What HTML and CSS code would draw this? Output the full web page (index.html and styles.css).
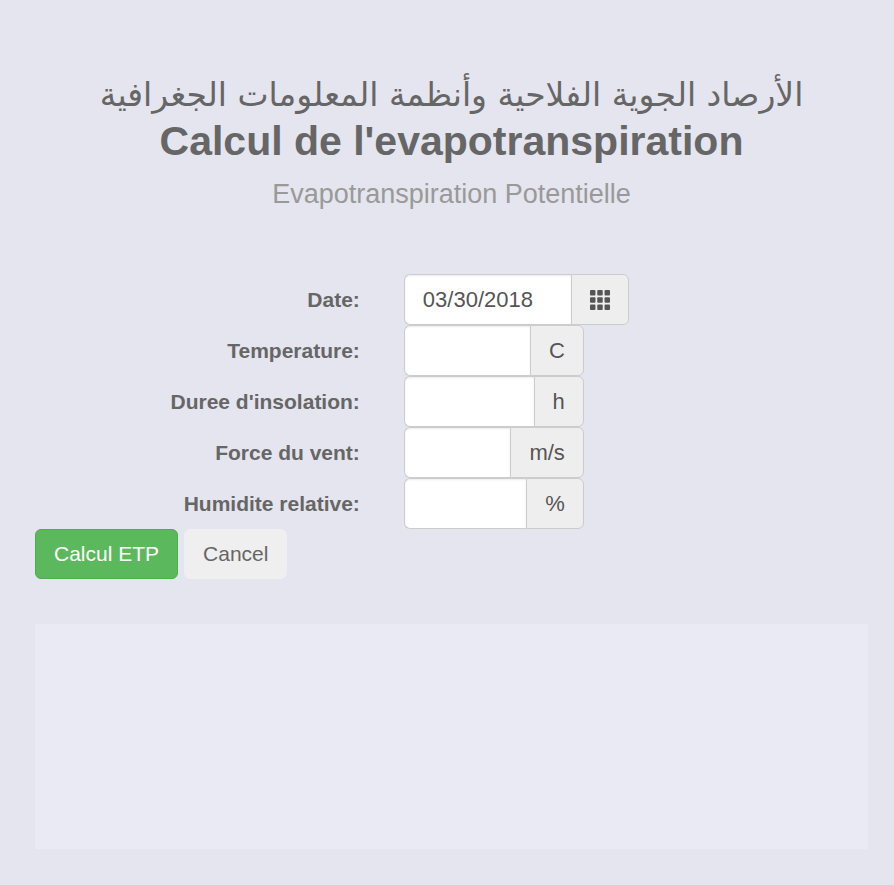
FILE: index.html
```
<!doctype html>
<html lang="fr">
<head>
	<title>Calcul de l'evapotranspiration</title>
<meta charset="utf-8">
<link rel="stylesheet" href="styles.css">
</head>
<body>
	<header>
		<h1><span class="arabic" lang="ar" dir="rtl">الأرصاد الجوية الفلاحية وأنظمة المعلومات الجغرافية</span>
		Calcul de l'evapotranspiration</h1>
		<p class="subtitle">Evapotranspiration Potentielle</p>
	</header>

	<form>
		<div class="row">
			<label for="date">Date:</label>
			<div class="group date">
				<input type="text" id="date" value="03/30/2018">
				<button type="button" class="addon" aria-label="Calendar">
					<!-- 3x3 grid icon -->
					<svg width="20" height="20" viewBox="0 0 22 22" fill="currentColor">
						<rect x="0" y="0" width="6" height="6" rx="1"/>
						<rect x="8" y="0" width="6" height="6" rx="1"/>
						<rect x="16" y="0" width="6" height="6" rx="1"/>
						<rect x="0" y="8" width="6" height="6" rx="1"/>
						<rect x="8" y="8" width="6" height="6" rx="1"/>
						<rect x="16" y="8" width="6" height="6" rx="1"/>
						<rect x="0" y="16" width="6" height="6" rx="1"/>
						<rect x="8" y="16" width="6" height="6" rx="1"/>
						<rect x="16" y="16" width="6" height="6" rx="1"/>
					</svg>
				</button>
			</div>
		</div>
		<div class="row">
			<label for="temperature">Temperature:</label>
			<div class="group">
				<input type="text" id="temperature">
				<span class="addon">C</span>
			</div>
		</div>
		<div class="row">
			<label for="insolation">Duree d'insolation:</label>
			<div class="group">
				<input type="text" id="insolation">
				<span class="addon">h</span>
			</div>
		</div>
		<div class="row">
			<label for="vent">Force du vent:</label>
			<div class="group">
				<input type="text" id="vent">
				<span class="addon">m/s</span>
			</div>
		</div>
		<div class="row">
			<label for="humidite">Humidite relative:</label>
			<div class="group">
				<input type="text" id="humidite">
				<span class="addon">%</span>
			</div>
		</div>
		<div class="buttons">
			<button type="submit" class="btn calcul">Calcul ETP</button>
			<button type="reset" class="btn cancel">Cancel</button>
		</div>
	</form>

	<div class="result"></div>
</body>
</html>
```
FILE: styles.css
```
* {
	box-sizing: border-box;
}

body {
	margin: 0;
	padding: 72px 26px 36px 35px;
	background-color: #e4e5ee;
	color: #666;
	font-family: "Liberation Sans", Arial, sans-serif;
	font-size: 21px;
	line-height: 30px;
}

header {
	text-align: center;
	margin-bottom: 62px;
}

h1 {
	margin: 0;
	font-size: 41px;
	line-height: 46px;
}

.arabic {
	display: block;
	font-family: "DejaVu Sans", sans-serif;
	font-size: 33px;
	font-weight: normal;
}

.subtitle {
	margin: 12px 0 0;
	color: #999;
	font-size: 27px;
	line-height: 36px;
}

.row {
	display: flex;
	align-items: center;
}

label {
	width: 39%;
	margin-right: 44px;
	text-align: right;
	font-weight: bold;
}

.group {
	display: flex;
	width: 180px;
	height: 51px;
	font-size: 22px;
}

.date {
	width: 225px;
}

input {
	flex: 1;
	min-width: 0;
	padding: 0 18px;
	border: 1px solid #ccc;
	border-right: 0;
	border-radius: 6px 0 0 6px;
	background-color: #fff;
	box-shadow: inset 0 1px 2px rgba(0, 0, 0, 0.08);
	color: #555;
	font: inherit;
}

.addon {
	display: flex;
	align-items: center;
	padding: 0 18px;
	border: 1px solid #ccc;
	border-radius: 0 6px 6px 0;
	background-color: #eee;
	color: #555;
	font: inherit;
}

.buttons {
	display: flex;
	gap: 6px;
}

.btn {
	height: 50px;
	padding: 0 18px;
	border: 1px solid #efefef;
	border-radius: 6px;
	background-color: #efefef;
	color: #666;
	font: inherit;
}

.calcul {
	border-color: #4cae4c;
	background-color: #5cb85c;
	color: #fff;
}

.result {
	height: 225px;
	margin-top: 45px;
	background-color: #e9eaf4;
}
```
